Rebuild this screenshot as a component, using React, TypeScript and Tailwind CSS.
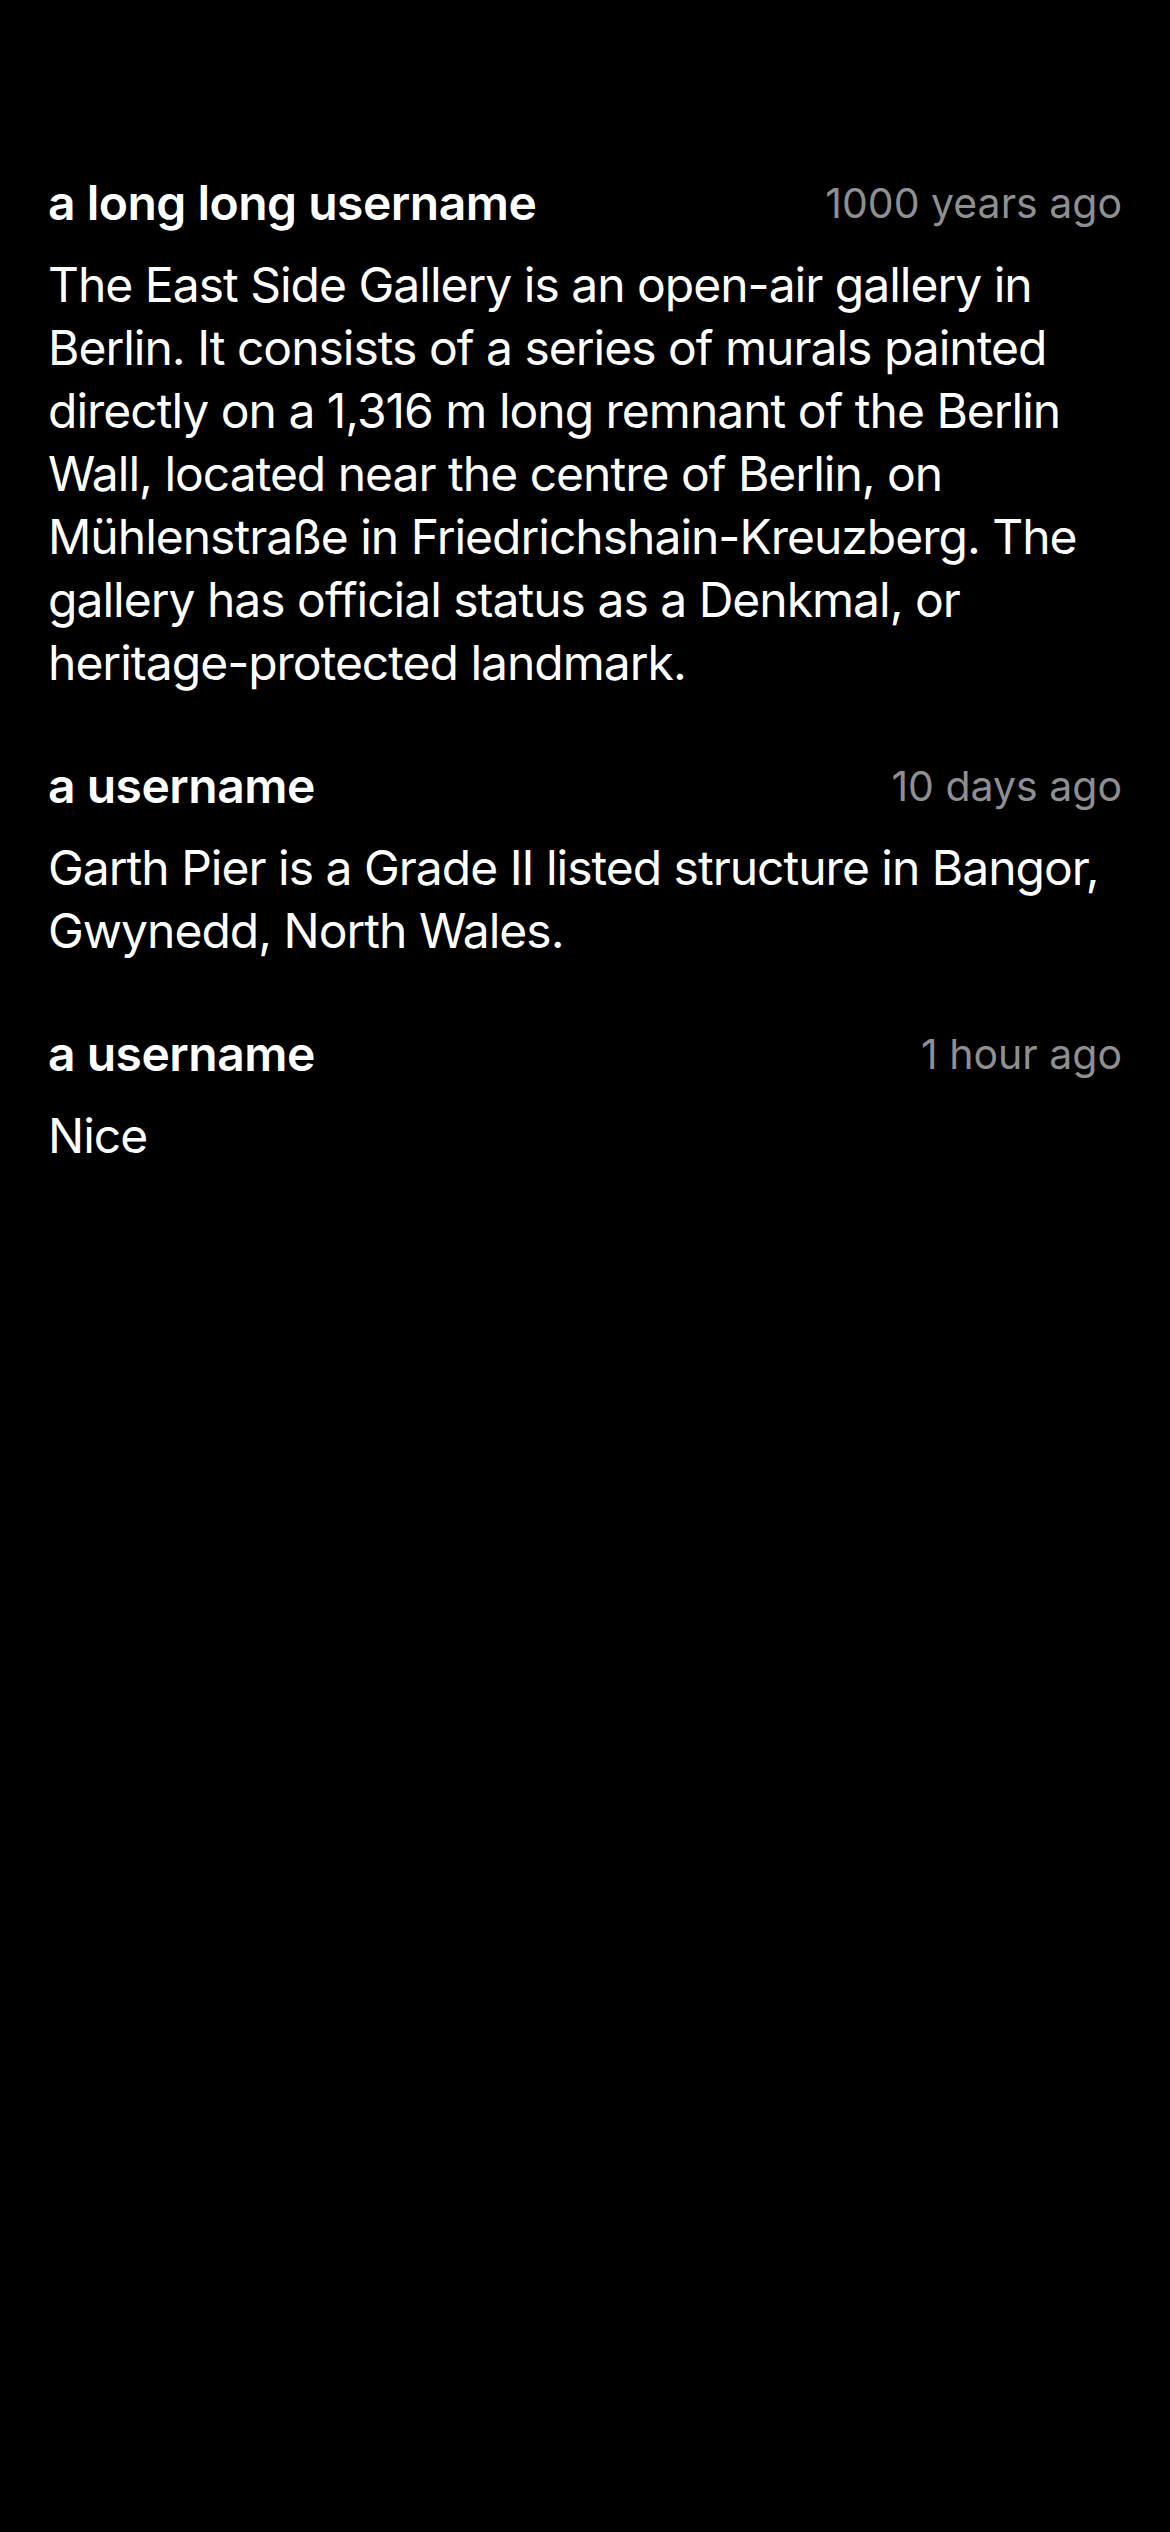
const comments = [
  {
    user: "a long long username",
    time: "1000 years ago",
    body: "The East Side Gallery is an open-air gallery in Berlin. It consists of a series of murals painted directly on a 1,316 m long remnant of the Berlin Wall, located near the centre of Berlin, on Mühlenstraße in Friedrichshain-Kreuzberg. The gallery has official status as a Denkmal, or heritage-protected landmark.",
  },
  {
    user: "a username",
    time: "10 days ago",
    body: "Garth Pier is a Grade II listed structure in Bangor, Gwynedd, North Wales.",
  },
  {
    user: "a username",
    time: "1 hour ago",
    body: "Nice",
  },
]

export default function App() {
  return (
    <div className="min-h-[2532px] w-[1170px] bg-black px-12 pt-[173px] font-['Inter','Noto_Sans',sans-serif] text-white">
      <ul className="flex flex-col gap-[62px]">
        {comments.map((c, i) => (
          <li key={i} className="flex flex-col gap-[20px]">
            <div className="flex items-center justify-between leading-[60px]">
              <span className="text-[48px] font-semibold tracking-[-0.5px]">{c.user}</span>
              <span className="text-[41px] text-[#8e8e93]">{c.time}</span>
            </div>
            <p className="text-[48px] leading-[63px] tracking-[-1px]">{c.body}</p>
          </li>
        ))}
      </ul>
    </div>
  )
}
